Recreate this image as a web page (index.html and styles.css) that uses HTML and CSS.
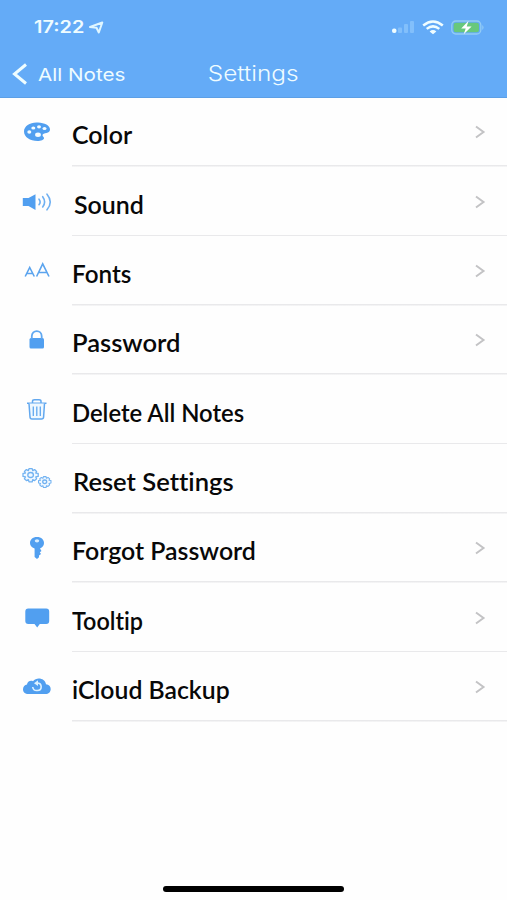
FILE: index.html
```
<!DOCTYPE html>
<html lang="en">
<head>
<meta charset="utf-8">
<title>Settings</title>
<link rel="stylesheet" href="styles.css">
</head>
<body>
<svg width="0" height="0" class="defs" aria-hidden="true">
  <symbol id="chevron" viewBox="0 0 12 16"><path d="M2 2.500 9.500 8 2 13.500" fill="none" stroke="#c3c3c5" stroke-width="2"/></symbol>
</svg>
<header class="top">
  <div class="status">
    <div class="time">
      <span class="clock">17:22</span>
      <svg width="15" height="13" viewBox="0 0 15 13"><path d="M1 6 13.300 1.500 9.800 11.500 7.500 6.800Z" fill="none" stroke="#dff6ff" stroke-width="2" stroke-linejoin="round"/></svg>
    </div>
    <div class="signals">
      <svg width="24" height="14" viewBox="0 0 24 14"><rect x="1" y="8.500" width="4.500" height="4.500" rx="2" fill="#f0fdff"/><g fill="#82bffb"><rect x="7" y="7.500" width="4" height="5.500" rx="1"/><rect x="13" y="4" width="4" height="9" rx="1"/><rect x="19" y="1" width="4" height="12" rx="1"/></g></svg>
      <svg width="22" height="15" viewBox="0 0 22 15"><g fill="none" stroke="#f0fdff" stroke-width="2.500"><path d="M1.200 5.500Q11-2.500 20.800 5.500"/><path d="M4.700 8.900Q11 3.800 17.300 8.900"/></g><path d="M7.600 11.400Q11 8.800 14.400 11.400L11 14.300Z" fill="#f0fdff"/></svg>
      <svg width="34" height="15" viewBox="0 0 34 15"><rect x=".8" y="1" width="29" height="13" rx="4" fill="none" stroke="#93ccf5" stroke-width="1.300"/><rect x="2.600" y="2.800" width="25.400" height="9.400" rx="2.300" fill="#68c87c"/><path d="M31.300 5v5q2.600-2.500 0-5" fill="#93ccf5"/><path d="M17.600.8 10.200 8.400h4.500L12.700 14.200 20.600 6.600h-4.900Z" fill="#fff"/></svg>
    </div>
  </div>
  <nav class="nav">
    <a class="back">
      <svg width="16" height="22" viewBox="0 0 16 22"><path d="M14 1.500 2.500 11 14 20.500" fill="none" stroke="#effdff" stroke-width="3"/></svg>
      <span>All Notes</span>
    </a>
    <h1>Settings</h1>
  </nav>
</header>
<main class="list">
  <div class="row">
    <span class="icon"><svg width="30" height="24" viewBox="0 0 30 24"><path fill="#519ff0" d="M16 2.600C8.500 2 2 6 2 11.500 2 17 8 21 15.500 21c3.500 0 6.500-1.200 6.500-2.800 0-1.200-1.500-1.700-1.500-2.900 0-1.400 2-1.700 4-2.200 2.300-.6 3.500-1.700 3.500-3.500C28 5.500 22.500 2.900 16 2.600Z"/><g fill="#f4fcff"><ellipse cx="7.300" cy="12" rx="2" ry="1.700"/><ellipse cx="11.300" cy="8" rx="2" ry="1.600"/><ellipse cx="17" cy="6.800" rx="2" ry="1.600"/><ellipse cx="22.500" cy="8.500" rx="2" ry="1.600"/><ellipse cx="16" cy="14.800" rx="2.900" ry="2.200"/></g></svg></span>
    <span class="label color">Color</span><svg class="chev"><use href="#chevron"/></svg>
  </div>
  <div class="row">
    <span class="icon"><svg width="30" height="24" viewBox="0 0 30 24"><path fill="#519ff0" d="M.8 8H6.500L13.500 4.200V20L6.500 16H.8Z"/><g fill="none" stroke="#6fb0f2" stroke-width="1.600" stroke-linecap="round"><path d="M17 9.200Q19.300 12 17 14.700"/><path d="M20.700 6.700Q24.500 12 20.700 17"/><path d="M25 4.200Q31.500 12 25 19.800"/></g></svg></span>
    <span class="label sound">Sound</span><svg class="chev"><use href="#chevron"/></svg>
  </div>
  <div class="row">
    <span class="icon"><svg width="30" height="24" viewBox="0 0 30 24"><g fill="none" stroke="#5ba4ee" stroke-width="1.600"><path d="M3.200 17.500 7.700 8.500 12.300 17.500M4.800 14.500h6"/><path d="M14.600 17.500 20.700 4.800 27 17.500M16.700 13.500h8"/></g></svg></span>
    <span class="label fonts">Fonts</span><svg class="chev"><use href="#chevron"/></svg>
  </div>
  <div class="row">
    <span class="icon"><svg width="30" height="24" viewBox="0 0 30 24"><rect x="7.500" y="10" width="14.500" height="10.500" rx="1.500" fill="#519ff0"/><path d="M9.800 11V8.200C9.800 1.300 19.700 1.300 19.700 8.200V11" fill="none" stroke="#60a8f1" stroke-width="1.800"/></svg></span>
    <span class="label password">Password</span><svg class="chev"><use href="#chevron"/></svg>
  </div>
  <div class="row">
    <span class="icon"><svg width="30" height="24" viewBox="0 0 30 24"><g fill="none" stroke="#62a8ef" stroke-width="1.500"><path d="M5 5.200H24.500M10.500 5V3.200Q10.500 1.700 12.500 1.700H17Q19 1.700 19 3.200V5"/><path d="M7 5.500 8 19Q8.100 21 10 21H19.500Q21.500 21 21.600 19L22.500 5.500" fill="#eff8ff"/><path d="M11.300 8.500V18M14.800 8.500V18M18.300 8.500V18" stroke-width="1.300"/></g></svg></span>
    <span class="label delete">Delete All Notes</span>
  </div>
  <div class="row">
    <span class="icon"><svg width="30" height="24" viewBox="0 0 30 24"><g fill="#f0f8ff" stroke="#72b2f1" stroke-width="1.300" stroke-linejoin="round"><path id="gear" d="M7 1.600h3.200l.5 2 1.900-1 2 1.800-.8 1.700 2.400.3v3l-2.400.5.8 1.800-2 1.900-1.900-.9-.5 2.200H7l-.6-2.200-2 .9-2-1.900 1-1.800L1 9.400v-3l2.400-.3-1-1.700 2-1.800 2 1Z"/><ellipse cx="8.600" cy="8" rx="2.800" ry="2.500"/><use href="#gear" transform="translate(15.700 8.300) scale(.82)"/><ellipse cx="22.700" cy="14.800" rx="2" ry="1.800"/></g></svg></span>
    <span class="label reset">Reset Settings</span>
  </div>
  <div class="row">
    <span class="icon"><svg width="30" height="24" viewBox="0 0 30 24"><path fill="#519ff0" d="M15 1C10.500 1 8 3.700 8 7c0 2.700 1.500 4.400 4.600 5.500V21L15 23l2-1.700v-1.800l2-1.500-1.200-1.700 1.700-1.400-1.500-2.500C20.600 11.300 22 9.500 22 7c0-3.300-2.500-6-7-6Z"/><ellipse cx="15" cy="4.800" rx="2.200" ry="1.600" fill="#d7edff"/></svg></span>
    <span class="label forgot">Forgot Password</span><svg class="chev"><use href="#chevron"/></svg>
  </div>
  <div class="row">
    <span class="icon"><svg width="30" height="24" viewBox="0 0 30 24"><path fill="#519ff0" d="M6.300 2.500H24.200Q27.200 2.500 27.200 5.500V15Q27.200 18 24.200 18H17.800L15.200 21.500 12.500 18H6.300Q3.300 18 3.300 15V5.500Q3.300 2.500 6.300 2.500Z"/></svg></span>
    <span class="label tooltip">Tooltip</span><svg class="chev"><use href="#chevron"/></svg>
  </div>
  <div class="row">
    <span class="icon"><svg width="30" height="24" viewBox="0 0 30 24"><path fill="#519ff0" d="M6.500 19C3 19 1 17 1 14.200 1 11.500 2.800 10 5 9.500 5.200 6.500 8.500 5 11 6.200 14.500 1.500 23 2.800 24 9.300 27 9.600 28.700 11.500 28.700 14 28.700 17 26.500 19 23.500 19Z"/><path d="M15 8C20.500 8 20.500 15.300 15.300 15.500 12.500 15.700 11 14 10.700 12" fill="none" stroke="#def2ff" stroke-width="1.600"/><path d="M12 8.200 16 5.200V11Z" fill="#def2ff"/></svg></span>
    <span class="label icloud">iCloud Backup</span><svg class="chev"><use href="#chevron"/></svg>
  </div>
</main>
<footer class="home"><div class="bar"></div></footer>
</body>
</html>
```
FILE: styles.css
```
body {
  margin: 0;
  height: 900px;
  display: flex;
  flex-direction: column;
  background: #fefefe;
  font-family: Inter, "Liberation Sans", sans-serif;
}
.defs { display: none; }
.top {
  height: 97.600px;
  box-sizing: border-box;
  background: #64abf7;
  border-bottom: 1px solid #5c9fe6;
  color: #effcff;
}
.status {
  display: flex;
  justify-content: space-between;
  align-items: center;
  height: 54px;
  padding: 0 22px 0 34px;
}
.time, .signals { display: flex; align-items: center; }
.time { gap: 12px; }
.signals { gap: 7px; }
.clock {
  font-weight: 600;
  font-size: 17px;
  transform: scaleX(1.17);
  transform-origin: left;
}
.nav {
  display: grid;
  grid-template-columns: 1fr auto 1fr;
  align-items: center;
  height: 40px;
}
.back {
  display: flex;
  align-items: center;
  gap: 10px;
  padding-left: 12px;
  font-size: 17.500px;
}
.back span {
  transform: scaleX(1.18);
  transform-origin: left;
}
h1 {
  margin: 0;
  font-size: 21px;
  font-weight: 300;
  line-height: 26px;
  transform: scaleX(1.16);
}
.list { flex: 1; }
.row {
  display: flex;
  align-items: center;
  height: 69.330px;
  padding: 0 21px 0 22px;
  background: linear-gradient(#e9e9eb, #e9e9eb) no-repeat 72px 100% / 100% 1.500px;
  box-sizing: border-box;
}
.icon { display: flex; width: 30px; }
.label {
  flex: 1;
  margin-left: 20px;
  padding-top: 6px;
  font: 600 24px/30px Lato, sans-serif;
  font-variant-ligatures: none;
  color: #080808;
  transform-origin: left;
}
.color { transform: scaleX(1.040); }
.sound { transform: translateX(2px) scaleX(1.040); }
.fonts { transform: scaleX(1.010); }
.password { transform: scaleX(1.065); }
.delete { transform: scaleX(.993); }
.reset { transform: translateX(1px) scaleX(1.065); }
.forgot { transform: scaleX(1.037); }
.tooltip { transform: scaleX(.975); }
.icloud { transform: scaleX(1.032); }
.chev { width: 12px; height: 16px; }
.home {
  display: flex;
  justify-content: center;
  height: 14px;
}
.bar {
  width: 181px;
  height: 6px;
  border-radius: 3px;
  background: #000;
}
```
